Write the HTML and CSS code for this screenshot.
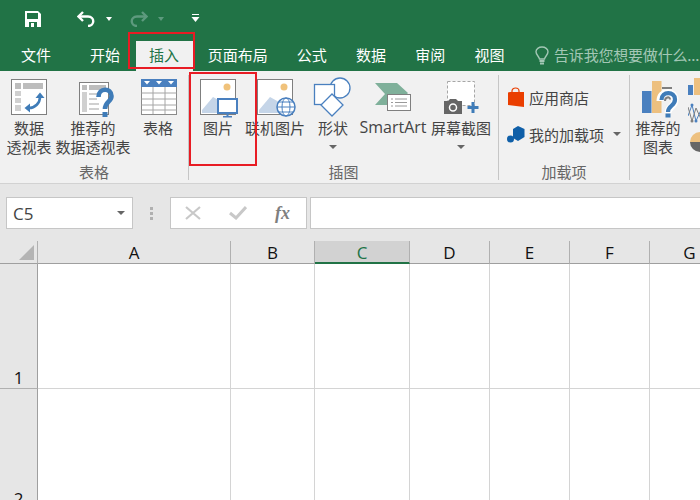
FILE: index.html
```html
<!DOCTYPE html>
<html lang="zh-CN">
<head>
    <meta charset="UTF-8">
    <title>Excel 插入</title>
    <link rel="stylesheet" href="styles.css">
</head>
<body>

    <!-- quick access toolbar -->
    <div class="titlebar">
        <svg class="qa-save" width="16" height="16" viewBox="0 0 16 16">
            <path d="M0 0H13L16 3V16H0Z" fill="#fff"/>
            <rect x="2" y="2" width="11" height="6" fill="#217346"/>
            <rect x="4" y="11" width="8" height="5" fill="#217346"/>
            <rect x="6" y="12" width="3" height="4" fill="#fff"/>
        </svg>
        <svg class="qa-undo" width="18" height="16" viewBox="0 0 18 16">
            <path d="M6 1L1.5 5.5L6 10" fill="none" stroke="#fff" stroke-width="2.4"/>
            <path d="M2 5.5H11C18 5.5 18 15 11 15" fill="none" stroke="#fff" stroke-width="2.4"/>
        </svg>
        <span class="caret caret-undo"></span>
        <svg class="qa-redo" width="18" height="16" viewBox="0 0 18 16">
            <path d="M12 1L16.5 5.5L12 10" fill="none" stroke="#5d9a7e" stroke-width="2.4"/>
            <path d="M16 5.5H7C0 5.5 0 15 7 15" fill="none" stroke="#5d9a7e" stroke-width="2.4"/>
        </svg>
        <span class="caret caret-redo"></span>
        <svg class="qa-more" width="9" height="9" viewBox="0 0 9 9">
            <rect x="1" y="0" width="7" height="1" fill="#fff"/>
            <path d="M0.5 3H8.5L4.5 8Z" fill="#fff"/>
        </svg>
    </div>

    <!-- tabs -->
    <div class="tabs">
        <div class="tab tab-file">文件</div>
        <div class="tab tab-home">开始</div>
        <div class="tab active">插入</div>
        <div class="tab">页面布局</div>
        <div class="tab">公式</div>
        <div class="tab">数据</div>
        <div class="tab">审阅</div>
        <div class="tab">视图</div>
        <div class="tell-me">
            <svg width="14" height="19" viewBox="0 0 14 19">
                <path d="M4.5 13C4 10 1 9 1 5.8C1 3 3.8 1 7 1C10.2 1 13 3 13 5.8C13 9 10 10 9.5 13Z" fill="none" stroke="#a3c7b5" stroke-width="1.4"/>
                <rect x="4.5" y="14" width="5" height="2" fill="#a3c7b5"/>
                <rect x="5" y="16.5" width="4" height="2" fill="#a3c7b5"/>
            </svg>
            <span class="tell-text">告诉我您想要做什么...</span>
        </div>
    </div>

    <!-- ribbon -->
    <div class="ribbon">
        <div class="group group-tables">
            <div class="group-items">
                <div class="btn btn-pivot">
                    <svg class="icon" viewBox="0 0 40 43">
                        <rect x="2.5" y="2.5" width="35" height="35" fill="#fff" stroke="#7f7f7f"/>
                        <rect x="6" y="6" width="6" height="6" fill="#bdbdbd"/>
                        <rect x="14" y="6" width="20" height="6" fill="#bdbdbd"/>
                        <rect x="6" y="14" width="6" height="5" fill="#d0d0d0"/>
                        <rect x="6" y="21" width="6" height="5" fill="#d0d0d0"/>
                        <rect x="6" y="28" width="6" height="6" fill="#d0d0d0"/>
                        <path d="M31 20C31 26 26 31 20 31" fill="none" stroke="#3f7cb8" stroke-width="2.6"/>
                        <path d="M26.5 21L31 15.5L35.5 21Z" fill="#3f7cb8"/>
                        <path d="M21 26.5L15.5 31L21 35.5Z" fill="#3f7cb8"/>
                    </svg>
                    <div class="label">数据<br>透视表</div>
                </div>
                <div class="btn btn-recommend">
                    <svg class="icon" viewBox="0 0 40 43">
                        <rect x="6.5" y="5.5" width="29" height="32" fill="#fff" stroke="#7f7f7f"/>
                        <rect x="9" y="8" width="5" height="5" fill="#bdbdbd"/>
                        <rect x="16" y="8" width="17" height="5" fill="#bdbdbd"/>
                        <rect x="9" y="15" width="5" height="20" fill="#d0d0d0"/>
                        <rect x="16" y="16" width="10" height="2" fill="#d0d0d0"/>
                        <rect x="16" y="21" width="8" height="2" fill="#d0d0d0"/>
                        <rect x="16" y="26" width="10" height="2" fill="#d0d0d0"/>
                        <rect x="16" y="31" width="10" height="2" fill="#d0d0d0"/>
                        <path d="M25.5 20C25.5 10.5 38.500 10.500 38.500 19C38.500 25 32 24.500 32 32" fill="none" stroke="#3f7cb8" stroke-width="4.6"/>
                        <rect x="29.500" y="35" width="5" height="5" fill="#3f7cb8"/>
                    </svg>
                    <div class="label">推荐的<br>数据透视表</div>
                </div>
                <div class="btn btn-table">
                    <svg class="icon" viewBox="0 0 40 43">
                        <rect x="3.500" y="2.500" width="35" height="35" fill="#fff" stroke="#8a8a8a"/>
                        <path d="M3.500 16H38.500M3.500 22H38.500M3.500 28H38.500M3.500 33H38.500M15 9V37M27 9V37" stroke="#a6a6a6" fill="none"/>
                        <rect x="3" y="2" width="36" height="8" fill="#4a80bf"/>
                        <path d="M6 4H12L9 7.500ZM18 4H24L21 7.500ZM30 4H36L33 7.500Z" fill="#fff"/>
                    </svg>
                    <div class="label">表格</div>
                </div>
            </div>
            <div class="group-name">表格</div>
        </div>

        <div class="group group-illus">
            <div class="group-items">
                <div class="btn btn-picture">
                    <svg class="icon" viewBox="0 0 40 43">
                        <rect x="2.500" y="2.500" width="35" height="35" fill="#fff" stroke="#7f7f7f"/>
                        <circle cx="29" cy="10" r="3.500" fill="#f0c27b"/>
                        <path d="M4 36V33L15 20L24 25V36Z" fill="#c5d5e8"/>
                        <rect x="20" y="22" width="19" height="14" fill="#fff" stroke="#4a80bf" stroke-width="2"/>
                        <rect x="28.500" y="36" width="2" height="3" fill="#4a80bf"/>
                        <rect x="25" y="39" width="9" height="1.500" fill="#4a80bf"/>
                    </svg>
                    <div class="label">图片</div>
                </div>
                <div class="btn btn-online">
                    <svg class="icon" viewBox="0 0 40 43">
                        <rect x="2.500" y="2.500" width="35" height="35" fill="#fff" stroke="#7f7f7f"/>
                        <circle cx="29" cy="10" r="3.500" fill="#f0c27b"/>
                        <path d="M4 36V33L15 20L24 25V36Z" fill="#c5d5e8"/>
                        <circle cx="31" cy="30" r="9" fill="#fff" stroke="#4a80bf" stroke-width="1.500"/>
                        <ellipse cx="31" cy="30" rx="4" ry="9" fill="none" stroke="#4a80bf"/>
                        <path d="M22 30H40M23.500 25H38.500M23.500 35H38.500" stroke="#4a80bf" fill="none"/>
                    </svg>
                    <div class="label">联机图片</div>
                </div>
                <div class="btn btn-shape">
                    <svg class="icon" viewBox="0 0 40 43">
                        <circle cx="27" cy="11" r="10" fill="#fff" stroke="#4a80bf" stroke-width="1.300"/>
                        <rect x="1.500" y="7.500" width="20" height="20" fill="#fff" stroke="#4a80bf" stroke-width="1.300"/>
                        <path d="M19 17L30 28L19 39L8 28Z" fill="#fff" stroke="#4a80bf" stroke-width="1.300"/>
                    </svg>
                    <div class="label">形状</div>
                    <span class="drop"></span>
                </div>
                <div class="btn btn-smart">
                    <svg class="icon" viewBox="0 0 40 43">
                        <path d="M2 6H24L35 16L24 28H2L12 17Z" fill="#7fb09a"/>
                        <rect x="14.500" y="17.500" width="23" height="16" fill="#fff" stroke="#7f7f7f"/>
                        <path d="M18 22H20M18 25.500H20M18 29H20M22 22H34M22 25.500H34M22 29H34" stroke="#9a9a9a" fill="none"/>
                    </svg>
                    <div class="label label-latin">SmartArt</div>
                </div>
                <div class="btn btn-shot">
                    <svg class="icon" viewBox="0 0 40 43">
                        <rect x="6.500" y="4.500" width="27" height="24" fill="#fff" stroke="#a6a6a6" stroke-dasharray="3 2"/>
                        <path d="M3 24H7L9 22H15L17 24H21V37H3Z" fill="#666"/>
                        <circle cx="12" cy="30.500" r="3.500" fill="#666" stroke="#fff" stroke-width="1.500"/>
                        <path d="M26.500 30.500H37.500M32 25V36" stroke="#3f7cb8" stroke-width="3" fill="none"/>
                    </svg>
                    <div class="label">屏幕截图</div>
                    <span class="drop"></span>
                </div>
            </div>
            <div class="group-name">插图</div>
        </div>

        <div class="group group-addins">
            <div class="group-items addin-list">
                <div class="addin-row addin-store">
                    <svg width="18" height="21" viewBox="0 0 18 21">
                        <path d="M1 6H17V20L1 18Z" fill="#ea3e00"/>
                        <path d="M1 6L3 5.500H17" fill="none" stroke="#ea3e00"/>
                        <path d="M5 7V4C5 0 12 0 12 4V7" fill="none" stroke="#ea3e00" stroke-width="1.200"/>
                    </svg>
                    <span>应用商店</span>
                </div>
                <div class="addin-row addin-mine">
                    <svg width="18" height="17" viewBox="0 0 18 17">
                        <path d="M11 0L17.500 3V11L11 15L6 12V3Z" fill="#0f5fa8"/>
                        <circle cx="3.500" cy="13" r="3.500" fill="#0f5fa8"/>
                    </svg>
                    <span>我的加载项</span>
                    <span class="drop drop-side"></span>
                </div>
            </div>
            <div class="group-name">加载项</div>
        </div>

        <div class="group group-charts">
            <div class="group-items">
                <div class="btn btn-chart">
                    <svg class="icon" viewBox="0 0 40 43">
                        <rect x="4" y="14" width="9.500" height="22" fill="#4a80bf"/>
                        <rect x="14" y="4" width="9.500" height="32" fill="#edc07f"/>
                        <rect x="24" y="10" width="10" height="2" fill="#7f7f7f"/>
                        <path d="M22 24C22 13 37 13 37 23C37 30 30 29 30 36" fill="none" stroke="#fff" stroke-width="7"/>
                        <path d="M23.500 23C23.500 14 37 14 37 22.500C37 29 30 28.500 30 35" fill="none" stroke="#3f7cb8" stroke-width="4.200"/>
                        <path d="M27 24C27 20 32 19 32 22.500" fill="none" stroke="#7f7f7f" stroke-width="2"/>
                        <rect x="27.500" y="36.500" width="5" height="4" fill="#3f7cb8"/>
                    </svg>
                    <div class="label">推荐的<br>图表</div>
                </div>
                <div class="mini-charts">
                    <svg width="14" height="17" viewBox="0 0 14 17">
                        <rect x="0" y="7" width="5" height="10" fill="#4a80bf"/>
                        <rect x="6" y="0" width="6" height="17" fill="#edc07f"/>
                    </svg>
                    <svg width="14" height="22" viewBox="0 0 14 22">
                        <path d="M0 14L4 3L8 19L13 8" fill="none" stroke="#4a80bf"/>
                        <path d="M0 5L4 19L8 6L13 17" fill="none" stroke="#7f7f7f"/>
                        <circle cx="4" cy="3" r="1.500" fill="#4a80bf"/>
                        <circle cx="4" cy="19" r="1.500" fill="#7f7f7f"/>
                        <circle cx="8" cy="19" r="1.500" fill="#4a80bf"/>
                    </svg>
                    <svg width="14" height="21" viewBox="0 0 14 21">
                        <path d="M12 1A10 10 0 0 0 2 11H12Z" fill="#edc07f"/>
                        <path d="M2 11A10 10 0 0 0 12 21V11Z" fill="#666"/>
                        <path d="M12 1A10 10 0 0 1 12 21Z" fill="#4a80bf"/>
                    </svg>
                </div>
            </div>
        </div>
    </div>

    <!-- formula bar -->
    <div class="formula-bar">
        <div class="name-box">
            <span>C5</span>
            <span class="drop"></span>
        </div>
        <div class="grip"><i></i><i></i><i></i></div>
        <div class="fx-buttons">
            <svg width="16" height="14" viewBox="0 0 16 14">
                <path d="M1 1L15 13M15 1L1 13" stroke="#c8c8c8" stroke-width="2.200" fill="none"/>
            </svg>
            <svg width="18" height="14" viewBox="0 0 18 14">
                <path d="M1 7L7 12L17 1" stroke="#c8c8c8" stroke-width="3" fill="none"/>
            </svg>
            <span class="fx">fx</span>
        </div>
        <div class="formula-input"></div>
    </div>

    <!-- sheet -->
    <div class="sheet">
        <div class="corner"><span class="corner-mark"></span></div>
        <div class="col-head">A</div>
        <div class="col-head">B</div>
        <div class="col-head selected">C</div>
        <div class="col-head">D</div>
        <div class="col-head">E</div>
        <div class="col-head">F</div>
        <div class="col-head">G</div>

        <div class="row-head">1</div>
        <div class="cell"></div><div class="cell"></div><div class="cell"></div><div class="cell"></div>
        <div class="cell"></div><div class="cell"></div><div class="cell"></div>

        <div class="row-head">2</div>
        <div class="cell"></div><div class="cell"></div><div class="cell"></div><div class="cell"></div>
        <div class="cell"></div><div class="cell"></div><div class="cell"></div>
    </div>

    <!-- red annotation boxes -->
    <div class="mark mark-tab"></div>
    <div class="mark mark-picture"></div>

</body>
</html>
```

FILE: styles.css
```css
* {
    margin: 0;
    padding: 0;
    box-sizing: border-box;
}

body {
    position: relative;
    width: 700px;
    height: 500px;
    overflow: hidden;
    background-color: #fff;
    color: #444;
    font-family: "Noto Sans CJK SC", "Liberation Sans", sans-serif;
    font-size: 15px;
}

.titlebar {
    display: flex;
    align-items: center;
    height: 41px;
    padding: 0 0 4px 25px;
    background-color: #217346;
}

.qa-undo {
    margin-left: 36px;
}

.caret {
    width: 0;
    height: 0;
    margin-left: 10.5px;
    border-left: 3.5px solid transparent;
    border-right: 3.5px solid transparent;
    border-top: 4px solid #fff;
}

.qa-redo {
    margin-left: 18.5px;
}

.caret-redo {
    margin-left: 9.5px;
    border-top-color: #5d9a7e;
}

.qa-more {
    margin-left: 27px;
}

.tabs {
    display: flex;
    height: 30px;
    background-color: #217346;
    color: #fff;
    line-height: 28px;
}

.tab {
    padding: 0 14.6px;
    white-space: nowrap;
}

.tab-file {
    padding: 0 21px;
}

.tab-home {
    padding: 0 16px 0 18px;
}

.tab.active {
    padding: 0 14px 0 13px;
    background-color: #f1f1f1;
    color: #217346;
}

.tell-me {
    display: flex;
    align-items: center;
    gap: 5px;
    margin-left: 16px;
    padding-bottom: 2px;
    color: #a3c7b5;
    white-space: nowrap;
}

.tell-text {
    letter-spacing: -0.2px;
}

.ribbon {
    display: flex;
    height: 113px;
    padding-top: 4px;
    background-color: #f1f1f1;
    border-bottom: 1px solid #d2d2d2;
}

.group {
    display: flex;
    flex-direction: column;
    height: 105px;
    padding-top: 2px;
    border-right: 1px solid #c6c6c6;
    flex-shrink: 0;
}

.group-tables {
    width: 189px;
    padding-left: 4px;
}

.group-tables .group-name {
    margin-left: -4px;
}

.group-illus {
    width: 310px;
}

.group-addins {
    width: 131px;
}

.group-charts {
    border-right: none;
}

.group-items {
    display: flex;
    height: 88px;
}

.group-name {
    height: 14px;
    line-height: 14px;
    text-align: center;
    color: #666;
}

.btn {
    display: flex;
    flex-direction: column;
    align-items: center;
    flex-shrink: 0;
    white-space: nowrap;
}

.btn-pivot { width: 50px; }
.btn-recommend { width: 78px; }
.btn-table { width: 52px; }
.btn-picture { width: 58px; }
.btn-online { width: 56px; }
.btn-shape { width: 60px; }
.btn-smart { width: 60px; }
.btn-shot { width: 76px; }
.btn-chart { width: 56px; }

.icon {
    width: 40px;
    height: 43px;
    flex-shrink: 0;
    overflow: visible;
}

.label {
    margin-top: -2px;
    line-height: 19px;
    text-align: center;
}

.label-latin {
    font-family: "Open Sans", sans-serif;
    font-size: 16px;
}

.drop {
    display: block;
    width: 0;
    height: 0;
    border-left: 4px solid transparent;
    border-right: 4px solid transparent;
    border-top: 4px solid #666;
}

.btn .drop {
    margin-top: 8px;
}

.addin-list {
    flex-direction: column;
    padding: 9px 0 0 8px;
}

.addin-row {
    display: flex;
    align-items: center;
    height: 22px;
    white-space: nowrap;
}

.addin-row svg {
    width: 18px;
    flex-shrink: 0;
    margin-right: 4px;
}

.addin-mine {
    margin-top: 15px;
}

.drop-side {
    margin-left: 9px;
}

.mini-charts {
    display: flex;
    flex-direction: column;
    gap: 7px;
    margin: 1px 0 0 2px;
}

.formula-bar {
    display: flex;
    height: 57px;
    padding: 13px 0 12px 6px;
    background-color: #e6e6e6;
}

.name-box {
    display: flex;
    align-items: center;
    justify-content: space-between;
    width: 127px;
    padding: 0 7px 0 6px;
    background-color: #fff;
    border: 1px solid #c6c6c6;
    font-family: "Open Sans", sans-serif;
    font-size: 17px;
    color: #444;
}

.grip {
    display: flex;
    flex-direction: column;
    align-items: center;
    justify-content: center;
    gap: 2px;
    width: 37px;
}

.grip i {
    display: block;
    width: 3px;
    height: 3px;
    background-color: #b0b0b0;
}

.fx-buttons {
    display: flex;
    align-items: center;
    justify-content: space-between;
    width: 137px;
    padding: 0 16px 0 14px;
    background-color: #fff;
    border: 1px solid #c6c6c6;
}

.fx {
    font-family: "Liberation Serif", serif;
    font-style: italic;
    font-weight: bold;
    font-size: 18px;
    color: #7f7f7f;
}

.formula-input {
    flex: 1;
    margin-left: 3px;
    background-color: #fff;
    border: 1px solid #c6c6c6;
    border-right: none;
}

.sheet {
    display: grid;
    grid-template-columns: 38px 193px 84px 95px 80px 80px 80px 80px;
    grid-template-rows: 23px 125px 121px;
    background-color: #e6e6e6;
    font-family: "Open Sans", sans-serif;
    font-size: 17px;
    color: #111;
}

.corner {
    display: flex;
    align-items: flex-end;
    justify-content: flex-end;
    padding: 0 3px 3px 0;
    border-right: 1px solid #b0b0b0;
    border-bottom: 1px solid #9f9f9f;
}

.corner-mark {
    width: 0;
    height: 0;
    border-left: 15px solid transparent;
    border-bottom: 15px solid #b4b4b4;
}

.col-head {
    line-height: 23px;
    text-align: center;
    border-right: 1px solid #b0b0b0;
    border-bottom: 1px solid #9f9f9f;
}

.col-head.selected {
    background-color: #d2d2d2;
    border-bottom: 2px solid #217346;
    color: #217346;
}

.row-head {
    display: flex;
    align-items: flex-end;
    justify-content: center;
    line-height: 20px;
    border-right: 1px solid #9f9f9f;
    border-bottom: 1px solid #b0b0b0;
}

.cell {
    background-color: #fff;
    border-right: 1px solid #d4d4d4;
    border-bottom: 1px solid #d4d4d4;
}

.mark {
    position: absolute;
    border: 2px solid #e81c24;
}

.mark-tab {
    left: 128px;
    top: 32px;
    width: 67px;
    height: 37px;
}

.mark-picture {
    left: 189px;
    top: 72px;
    width: 68px;
    height: 94px;
}
```
